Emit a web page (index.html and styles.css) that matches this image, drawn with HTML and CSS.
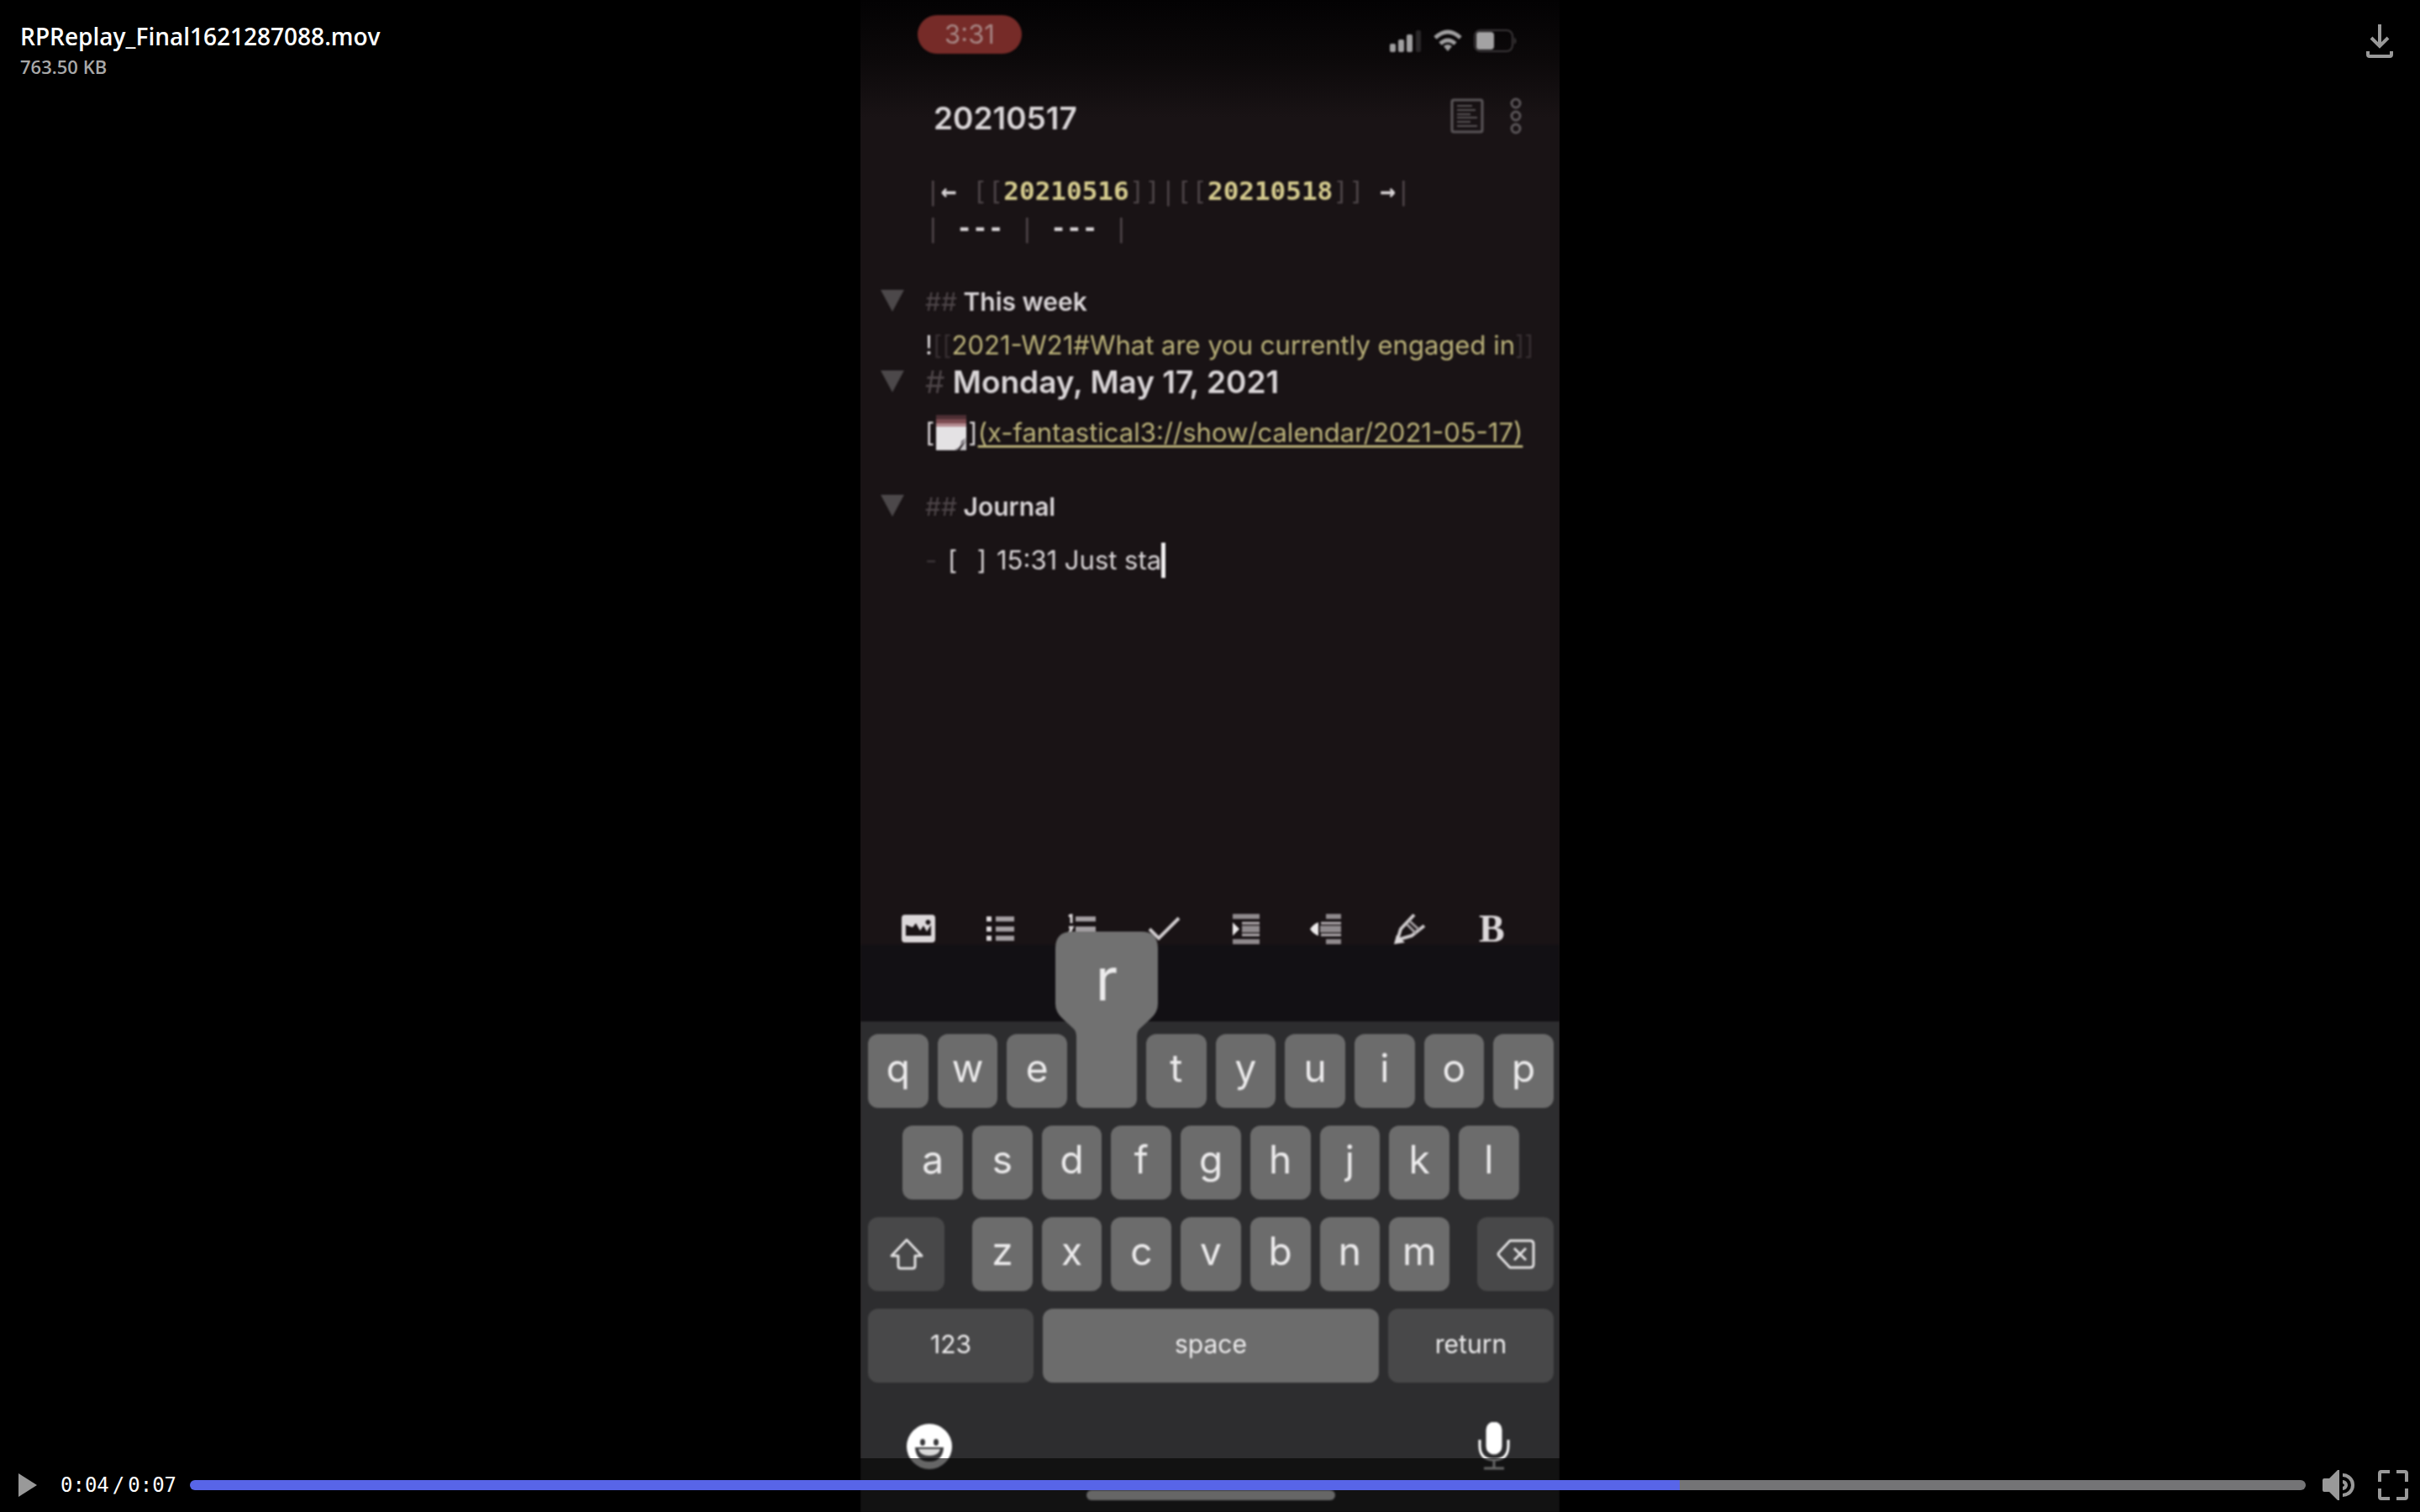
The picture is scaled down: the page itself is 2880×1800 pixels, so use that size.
FILE: index.html
```html
<!DOCTYPE html>
<html lang="en">
<head>
<meta charset="utf-8">
<title>RPReplay_Final1621287088.mov</title>
<link rel="stylesheet" href="styles.css">
</head>
<body>
<main class="viewer">
  <section class="phone" aria-label="Video frame">
    <div class="frame">
      <div class="status">
        <span class="pill">3:31</span>
        <div class="signals">
          <svg width="38" height="28" viewBox="0 0 38 28"><g fill="#a09fa0"><rect x="0" y="17" width="7" height="10" rx="2"/><rect x="10" y="12" width="7" height="15" rx="2"/><rect x="20" y="6" width="7" height="21" rx="2"/></g><rect x="31" y="1" width="6" height="26" rx="2" fill="#2b282a"/></svg>
          <svg width="34" height="28" viewBox="0 0 34 28" fill="none" stroke="#a09fa0" stroke-width="5"><path d="M2 10Q17-4 32 10"/><path d="M8 17q9-8 18 0"/><path d="M12 20q5-4 10 0l-5 6z" fill="#a09fa0" stroke="none"/></svg>
          <svg width="52" height="28" viewBox="0 0 52 28"><rect x="1" y="1" width="45" height="25" rx="7" fill="none" stroke="#3a3638" stroke-width="2"/><rect x="3" y="3" width="21" height="21" rx="4" fill="#a3a2a3"/><path d="M48 9q5 5 0 9z" fill="#3a3638"/></svg>
        </div>
      </div>

      <div class="titlebar">
        <span class="note-title">20210517</span>
        <div class="title-actions">
          <button aria-label="Reading view"><svg width="40" height="42" viewBox="0 0 40 42" fill="none" stroke="#5a5558" stroke-width="3"><rect x="2" y="2" width="36" height="38" rx="2"/><path stroke-width="2" d="M8 9h18M8 14h22M8 19h16M8 23h24M8 28h16M8 33h24"/></svg></button>
          <button aria-label="More options"><svg width="16" height="44" viewBox="0 0 16 44" fill="none" stroke="#5a5558" stroke-width="3"><circle cx="8" cy="7" r="5"/><circle cx="8" cy="22" r="5"/><circle cx="8" cy="37" r="5"/></svg></button>
        </div>
      </div>

      <div class="editor">
        <div class="row mono"><span class="dim">|</span>← <span class="dim">[[</span><b>20210516</b><span class="dim">]]|[[</span><b>20210518</b><span class="dim">]]</span> →<span class="dim">|</span></div>
        <div class="row mono"><span class="dim">|</span> --- <span class="dim">|</span> --- <span class="dim">|</span></div>

        <div class="row heading gap-xl"><button class="fold" aria-label="Fold This week"></button><h2><span class="dim">##</span> This week</h2></div>
        <div class="row gap-s">!<span class="faint">[[</span><span class="link">2021-W21#What are you currently engaged in</span><span class="faint">]]</span></div>
        <div class="row heading"><button class="fold" aria-label="Fold Monday"></button><h1><span class="dim">#</span> Monday, May 17, 2021</h1></div>
        <div class="row gap-m">[<svg class="emoji" width="36" height="42" viewBox="0 0 36 42"><path fill="#e4e2e4" d="M0 10h36v20L24 42H0z"/><path fill="#4d2f34" d="M0 0h36v6H0z"/><path fill="#7b4b50" d="M0 5h36v7H0z"/><path fill="#b48b90" d="M0 10h36v4H0z"/><path fill="#77737a" d="M22 41q8-2 8-10l6-4-10 15z"/><path fill="#c7c5c8" d="M28 42l8-12v12z"/></svg>]<a class="link" href="x-fantastical3://show/calendar/2021-05-17">(x-fantastical3://show/calendar/2021-05-17)</a></div>

        <div class="row heading gap-xl"><button class="fold" aria-label="Fold Journal"></button><h2><span class="dim">##</span> Journal</h2></div>
        <div class="row gap-m item"><span class="bullet">-</span><span class="box"><span>[</span> <span>]</span></span><span>15:31 Just sta</span><span class="caret"></span></div>
      </div>

      <div class="toolbar">
        <button aria-label="Insert image"><svg width="40" height="36" viewBox="0 0 40 36"><path fill="#dcd8da" fill-rule="evenodd" d="M4 1h32q4 0 4 4v25q0 4-4 4H4q-4 0-4-4V5q0-4 4-4zM5 13v13h30V13l-5 8-4-7-4 6-5-9-4 5zM31 7a3 3 0 1 0 1 0z"/></svg></button>
        <button aria-label="Bulleted list"><svg width="36" height="36" viewBox="0 0 36 36" stroke="#a39ea1" stroke-width="6"><path d="M13 6h22M13 18h22M13 29h22"/><path stroke="#dcd8da" d="M2 6h6M2 18h6M2 29h6"/></svg></button>
        <button aria-label="Numbered list"><svg width="36" height="36" viewBox="0 0 36 36" fill="none" stroke="#a39ea1" stroke-width="6"><path d="M10 6h24M10 18h24M10 29h24"/><path stroke="#dcd8da" stroke-width="3" d="M2 3l3-2v10M2 16h4l-4 8h5"/></svg></button>
        <button aria-label="Checklist"><svg width="40" height="36" viewBox="0 0 40 36" fill="none" stroke="#cfcbcd" stroke-width="4"><path d="M3 18l11 11L38 5"/></svg></button>
        <button aria-label="Indent"><svg width="36" height="36" viewBox="0 0 36 36"><path stroke="#8f8a8d" stroke-width="6" d="M2 3h32M13 18h21M2 33h32"/><path stroke="#b5b0b3" stroke-width="3" d="M13 11h21M13 25h21"/><path fill="#8f8a8d" d="M13 14h21v8H13z"/><path fill="#ece9ea" d="M2 10l8 8-8 8z"/></svg></button>
        <button aria-label="Outdent"><svg width="42" height="36" viewBox="0 0 42 36"><path fill="#8f8a8d" d="M19 0h18v6H19zM12 14h25v8H12zM19 30h18v6H19z"/><path stroke="#b5b0b3" stroke-width="3" d="M13 11h24M13 25h24"/><path fill="#ece9ea" d="M10 10v16q-6-2-10-8 4-6 10-8z"/></svg></button>
        <button aria-label="Highlight"><svg width="38" height="36" viewBox="0 0 38 36" fill="none" stroke="#cfcbcd" stroke-width="4"><path d="M24 1L8 18 4 31l17-5L36 14"/><path stroke="#a39ea1" stroke-width="3" d="M18 8l12 11M15 12l11 11"/><path fill="#dcd8da" stroke="none" d="M0 36l3-11 10 9z"/></svg></button>
        <button class="bold" aria-label="Bold">B</button>
      </div>

      <div class="suggestions"></div>

      <div class="keyboard">
        <div class="keys">
          <button>q</button><button>w</button><button>e</button><button class="pressed" aria-label="r"><svg width="122" height="210" viewBox="0 0 122 210"><path fill="#717171" d="M20 0h82q20 0 20 20v66q0 10-9 18l-13 12q-3 3-3 10v72q0 12-12 12H37q-12 0-12-12v-72q0-7-3-10L9 104q-9-8-9-18V20Q0 0 20 0z"/></svg><span>r</span></button><button>t</button><button>y</button><button>u</button><button>i</button><button>o</button><button>p</button>
        </div>
        <div class="keys">
          <button>a</button><button>s</button><button>d</button><button>f</button><button>g</button><button>h</button><button>j</button><button>k</button><button>l</button>
        </div>
        <div class="keys spread">
          <button class="side" aria-label="Shift"><svg width="42" height="40" viewBox="0 0 42 40" fill="none" stroke="#e0dfe0" stroke-width="3" stroke-linejoin="round"><path d="M21 3L3 22h8v12q0 3 3 3h14q3 0 3-3V22h8z"/></svg></button>
          <div class="keys middle"><button>z</button><button>x</button><button>c</button><button>v</button><button>b</button><button>n</button><button>m</button></div>
          <button class="side" aria-label="Delete"><svg width="46" height="38" viewBox="0 0 46 38" fill="none" stroke="#e0dfe0" stroke-width="3" stroke-linejoin="round"><path d="M16 3h24q4 0 4 4v24q0 4-4 4H16L3 21q-2-2 0-4zM21 12l14 14M35 12L21 26"/></svg></button>
        </div>
        <div class="keys wide">
          <button class="word">123</button><button class="word space">space</button><button class="word">return</button>
        </div>
        <div class="dock">
          <button aria-label="Emoji"><svg width="54" height="54" viewBox="0 0 54 54"><circle cx="27" cy="27" r="27" fill="#fff"/><ellipse cx="19" cy="22" rx="3" ry="4" fill="#39393b"/><ellipse cx="35" cy="22" rx="3" ry="4" fill="#39393b"/><path fill="#39393b" d="M10 28h34q-1 17-17 17T10 28z"/><path fill="#d8d8d8" d="M14 30h26q-2 8-13 8t-13-8z"/></svg></button>
          <button aria-label="Dictate"><svg width="38" height="58" viewBox="0 0 38 58" fill="none" stroke="#fff" stroke-width="3"><rect x="11" y="1" width="16" height="36" rx="8" fill="#fff"/><path d="M2 21v7q0 17 17 17t17-17v-7M19 45v10M7 55h24"/></svg></button>
        </div>
        <div class="home"></div>
      </div>
    </div>
  </section>

  <header class="meta">
    <div>
      <div class="filename">RPReplay_Final1621287088.mov</div>
      <div class="filesize">763.50 KB</div>
    </div>
    <button aria-label="Download"><svg width="32" height="42" viewBox="0 0 32 42" fill="none" stroke="#999" stroke-width="4"><path d="M16 1v26M6 17l10 10 10-10"/><path d="M2 33v4q0 2 2 2h24q2 0 2-2v-4"/></svg></button>
  </header>

  <footer class="controls">
    <button aria-label="Play"><svg width="22" height="28" viewBox="0 0 22 28"><path fill="#999" d="M0 0l22 14L0 28z"/></svg></button>
    <div class="time"><span>0:04</span><span>/</span><span>0:07</span></div>
    <input class="seek" type="range" min="0" max="1000" value="704" aria-label="Seek" style="--played:70.4%">
    <button aria-label="Volume"><svg width="38" height="36" viewBox="0 0 38 36"><path fill="#999" d="M18 0h2v36h-2L8 26H2q-2 0-2-2V12q0-2 2-2h6z"/><path fill="none" stroke="#999" stroke-width="4" d="M24 6a12 12 0 0 1 0 24"/><path fill="#999" d="M24 12a6 6 0 0 1 0 12v-4q4-2 0-4z"/></svg></button>
    <button aria-label="Full screen"><svg width="36" height="36" viewBox="0 0 36 36" fill="none" stroke="#999" stroke-width="4"><path d="M14 2H4Q2 2 2 4v10M22 2h10q2 0 2 2v10M34 22v10q0 2-2 2H22M14 34H4q-2 0-2-2V22"/></svg></button>
  </footer>
</main>
</body>
</html>
```

FILE: styles.css
```css
* { box-sizing: border-box; }

body { margin: 0; background: #000; }

button {
  display: flex;
  align-items: center;
  justify-content: center;
  padding: 0;
  border: 0;
  background: none;
  color: inherit;
  font: inherit;
}

svg { display: block; flex: none; }

.viewer {
  position: relative;
  min-height: 100vh;
  display: flex;
  justify-content: center;
}

/* video frame */
.phone {
  width: 100%;
  max-width: 832px;
  display: flex;
  overflow: hidden;
  background: linear-gradient(#030203, #0c090a 70px, #191315 140px);
  color: #d9d5d7;
  font-family: Inter, "Liberation Sans", sans-serif;
}

.frame {
  flex: 1;
  display: flex;
  flex-direction: column;
  filter: blur(1px);
}

.status {
  height: 88px;
  padding: 18px 50px 0 68px;
  display: flex;
  justify-content: space-between;
  align-items: flex-start;
}

.pill {
  width: 124px;
  border-radius: 24px;
  background: #762b28;
  color: #a68583;
  font-size: 31px;
  line-height: 46px;
  text-align: center;
}

.signals { display: flex; gap: 14px; padding-top: 17px; }

.titlebar {
  height: 104px;
  padding: 0 44px 0 87px;
  display: flex;
  justify-content: space-between;
  align-items: center;
}

.note-title { font-size: 37px; font-weight: 600; }

.title-actions { display: flex; align-items: center; gap: 30px; padding-bottom: 4px; }

.editor {
  flex: 1;
  padding: 13px 0 0 77px;
  font-size: 31px;
}

.row {
  position: relative;
  height: 44px;
  display: flex;
  align-items: center;
  line-height: 44px;
  white-space: pre;
}

.gap-s { margin-top: 8px; }
.gap-m { margin-top: 16px; }
.gap-xl { margin-top: 44px; }

.mono {
  font-family: "DejaVu Sans Mono", monospace;
  font-size: 31px;
  font-weight: 700;
}
.mono b { color: #d5cb8e; }

.dim { color: #4d4548; font-weight: 400; }
.faint { color: #372f32; }
.link { color: #bbb27a; }
a.link { text-underline-offset: 4px; text-decoration-thickness: 3px; }

h1, h2 { margin: 0; font-weight: 600; }
h1 { font-size: 37px; }
h2 { font-size: 30px; }

.fold {
  position: absolute;
  left: -53px;
  top: 8px;
  width: 28px;
  height: 26px;
  background: #4c484a;
  clip-path: polygon(0 0, 100% 0, 50% 100%);
}

.emoji { margin: 0 2px; }
.item { margin-top: 20px; }
.bullet { width: 27px; color: #3b3437; }
.box {
  display: flex;
  justify-content: space-between;
  width: 46px;
  margin-right: 12px;
}
.caret { width: 5px; height: 42px; background: #f2f0f1; }

.toolbar {
  display: grid;
  grid-template-columns: repeat(8, 1fr);
  height: 38px;
  padding: 0 32px 0 20px;
  color: #dcd8da;
}
.bold { font: 700 46px/38px "Liberation Serif", serif; }

.suggestions { height: 91px; background: #121014; }

.keyboard {
  padding: 15px 7px 14px 9px;
  background: #2d2d2f;
  color: #ecebec;
}

.keys {
  display: flex;
  justify-content: center;
  gap: 11px;
  margin-bottom: 21px;
}
.keys button {
  flex: none;
  width: calc((100% - 99px) / 10);
  height: 88px;
  padding-bottom: 8px;
  border-radius: 12px;
  background: #6c6c6c;
  font-size: 46px;
  font-weight: 400;
}
.spread { justify-content: space-between; }
.spread .side { width: 91px; padding: 0; background: #484849; }
.middle { width: 568px; margin: 0; }
.middle button { width: calc((100% - 66px) / 7); }

.wide { display: grid; grid-template-columns: 33fr 67fr 33fr; }
.wide .word {
  width: auto;
  padding-bottom: 4px;
  background: #484849;
  font-size: 30px;
}
.wide .space { background: #6c6c6c; }

.keys .pressed { position: relative; }
.pressed svg { position: absolute; left: -25px; bottom: 0; }
.pressed span {
  position: absolute;
  left: 0;
  right: 0;
  bottom: 113px;
  font-size: 70px;
  line-height: 80px;
  text-align: center;
}

.dock {
  display: flex;
  justify-content: space-between;
  align-items: center;
  margin-top: 47px;
  padding: 0 52px 0 46px;
}

.home {
  width: 296px;
  height: 12px;
  margin: 23px auto 0;
  border-radius: 6px;
  background: #fff;
}

/* player chrome */
.meta {
  position: absolute;
  top: 0;
  left: 0;
  right: 0;
  display: flex;
  justify-content: space-between;
  align-items: flex-start;
  padding: 23px 32px 0 24px;
  font-family: "Open Sans", "Noto Sans", sans-serif;
}
.meta button { margin-top: 5px; }
.filename { color: #fff; font-size: 28px; font-weight: 600; line-height: 40px; }
.filesize { color: #a8a8a8; font-size: 22px; font-weight: 600; line-height: 32px; }

.controls {
  position: absolute;
  left: 0;
  right: 0;
  bottom: 0;
  height: 64px;
  display: flex;
  align-items: center;
  padding: 0 14px 0 22px;
  background: rgba(0, 0, 0, .6);
}

.time {
  display: flex;
  gap: 4px;
  margin: 0 16px 0 28px;
  color: #fff;
  font: 24px/32px "DejaVu Sans Mono", monospace;
}

.seek {
  flex: 1;
  height: 12px;
  margin: 0 20px 0 0;
  appearance: none;
  border-radius: 6px;
  background: linear-gradient(to right, #5865e8 var(--played), #747476 var(--played));
}
.seek::-webkit-slider-thumb { appearance: none; width: 1px; height: 12px; opacity: 0; }

.controls .seek + button { margin-right: 28px; }
```
